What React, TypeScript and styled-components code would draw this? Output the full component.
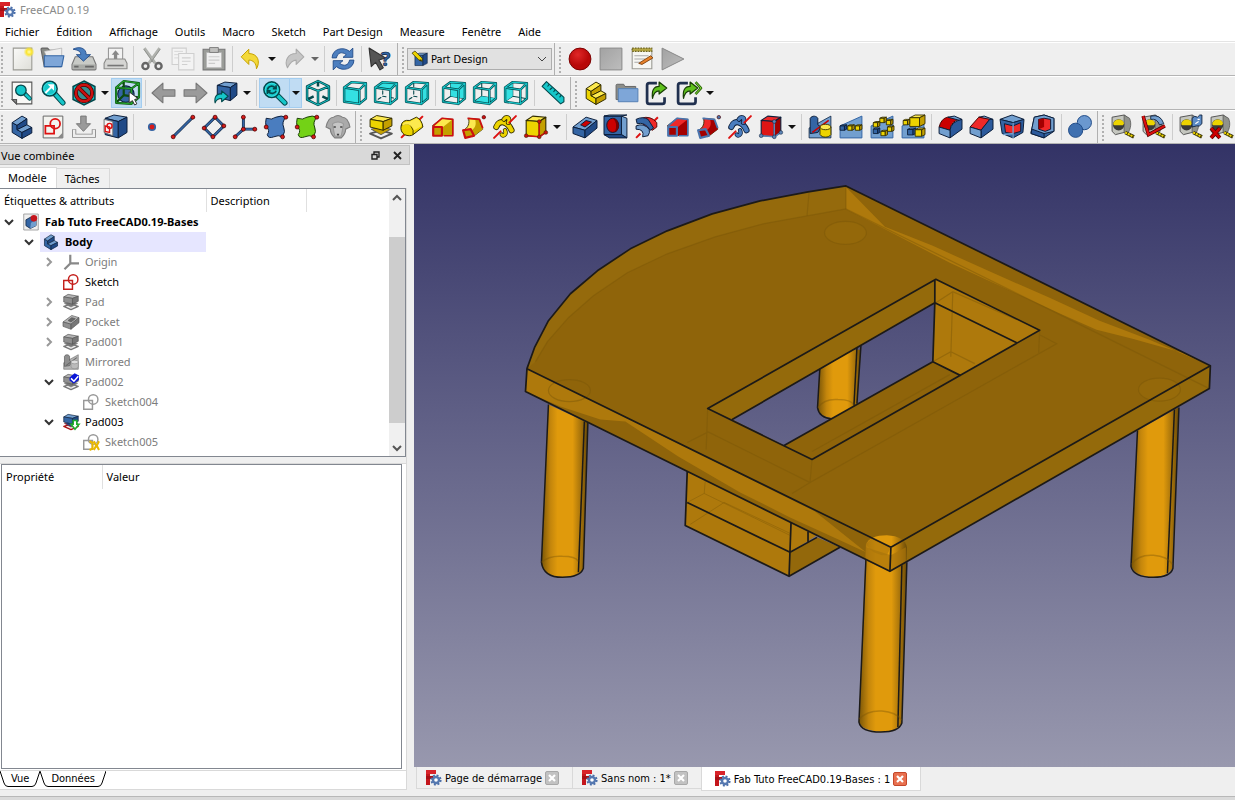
import React from "react";
import styled, { createGlobalStyle } from "styled-components";

const uiFont = '"Noto Sans", "Open Sans", "Liberation Sans", sans-serif';
const tabFont = '"DejaVu Sans Condensed", "DejaVu Sans", "Liberation Sans", sans-serif';

const GlobalStyle = createGlobalStyle`
  * { box-sizing: border-box; }
  body { margin: 0; background: #efefef; color: #000; font: 11px/16px ${uiFont}; }
  button, select { font: inherit; color: inherit; }
  h1, h2 { margin: 0; font: inherit; }
  svg { display: block; }
`;

/* ---------- palette of the icon theme ---------- */
const B = "#3465a4", BL = "#729fcf", BD = "#0b1e3a";
const T = "#16c6c9", TL = "#34e0e2", TD = "#04484c";
const Y = "#edd400", YL = "#fce94f", YM = "#c4a000", YD = "#302b00";
const R = "#cc0000", RL = "#ef2929", RD = "#4a0000";
const G = "#9a9a9a", GD = "#666";

type Tone = [string, string, string, string];
const blue: Tone = [BL, B, "#204a87", BD];
const yellow: Tone = [YL, Y, YM, YD];
const red: Tone = [RL, "#dd1515", "#a40000", BD];
const gray: Tone = ["#b4b4b4", "#8f8f8f", "#777", "#555"];

const Box = ({ x, y, w, h, d = w / 2, tone }: { x: number; y: number; w: number; h: number; d?: number; tone: Tone }) => (
  <g stroke={tone[3]} strokeWidth="0.8" strokeLinejoin="round">
    <path fill={tone[0]} d={`M${x} ${y + d / 2}L${x + d} ${y}H${x + w + d}L${x + w} ${y + d / 2}z`} />
    <path fill={tone[1]} d={`M${x} ${y + d / 2}h${w}v${h}h${-w}z`} />
    <path fill={tone[2]} d={`M${x + w} ${y + d / 2}l${d} ${-d / 2}v${h}l${-d} ${d / 2}z`} />
  </g>
);

const cubeFaces: Record<string, string> = {
  front: "M2 7L16 9V22L2 20z",
  top: "M2 7L9 2L22 3L16 9z",
  right: "M16 9L22 3V17L16 22z",
  rear: "M9 2L22 3V17L9 15z",
  bottom: "M2 20L9 15L22 17L16 22z",
  left: "M2 7L9 2V15L2 20z",
};
const WireCube = ({ face }: { face: string }) => (
  <g strokeLinejoin="round" strokeLinecap="round" fill="none">
    {face !== "front" && <path d="M9 3V15L3 19M9 15L21 17" stroke={TD} strokeWidth="1" strokeDasharray={face === "top" || face === "right" ? "3 4" : undefined} />}
    <path d={cubeFaces[face]} fill={TL} />
    <path d="M2 7L16 9V22L2 20zM2 7L9 2L22 3L16 9M22 3V17L16 22" stroke={TD} strokeWidth="2.2" />
    <path d="M2 7L16 9V22L2 20zM2 7L9 2L22 3L16 9M22 3V17L16 22" stroke={T} strokeWidth="1" />
  </g>
);

const Lens = ({ cx, cy, r }: { cx: number; cy: number; r: number }) => (
  <g>
    <path d={`M${cx + r * 0.7} ${cy + r * 0.7}L21 21`} stroke={TD} strokeWidth="5" strokeLinecap="round" />
    <path d={`M${cx + r * 0.8} ${cy + r * 0.8}L21 21`} stroke={T} strokeWidth="3.2" strokeLinecap="round" />
    <circle cx={cx} cy={cy} r={r} fill={T} stroke={TD} strokeWidth="1.4" />
    <circle cx={cx} cy={cy} r={r - 1.3} fill="none" stroke={TL} strokeWidth="0.9" />
  </g>
);

const Dots = ({ pts }: { pts: [number, number][] }) => (
  <>{pts.map(([x, y]) => <circle key={`${x}-${y}`} cx={x} cy={y} r="1.8" fill="#d61a1a" stroke={RD} strokeWidth="0.7" />)}</>
);

const Loft = ({ a, b, c }: { a: string; b: string; c: string }) => (
  <g strokeLinejoin="round">
    <path d="M2 11L11 4L21 5V19L12 20z" fill={a} stroke={YD} strokeWidth="0.6" />
    <path d="M12 12L21 5V19L12 20z" fill={b} />
    <path d="M3 11L11 4L21 5V20H13" fill="none" stroke={c} strokeWidth="1.5" />
    <path d="M3 12H11V20H3z" fill={b} stroke={c} strokeWidth="2" />
  </g>
);
const Pipe = ({ a, b, c }: { a: string; b: string; c: string }) => (
  <g strokeLinejoin="round">
    <path d="M2 15C7 13 8 8 7 4L17 5C17 10 20 12 20 14L11 21z" fill={a} stroke={YD} strokeWidth="0.8" />
    <path d="M13 5L17 5.5C17 10 20 12 20 14L12 20L10 15C14 12 14 9 13 5z" fill={b} />
    <path d="M6 4L17 5L20 13" fill="none" stroke={c} strokeWidth="1.6" />
    <path d="M2 15L9 14L12 20L4 22z" fill={b} stroke={c} strokeWidth="2" />
    <circle cx="21" cy="3" r="1.6" fill={c} stroke={RD} strokeWidth="0.6" />
  </g>
);
const Helix = ({ a, b, c }: { a: string; b: string; c: string }) => (
  <g fill="none" strokeLinecap="round">
    <path d="M4 12C7 4 15 8 18 15" stroke={b} strokeWidth="5.6" />
    <path d="M4 12C7 4 15 8 18 15" stroke={a} strokeWidth="4" />
    <path d="M11 5C13 2 17 3 15 8" stroke={b} strokeWidth="4.4" />
    <path d="M11 5C13 2 17 3 15 8" stroke={a} strokeWidth="3" />
    <path d="M9 19C10 21 14 19 12 15" stroke={b} strokeWidth="4" />
    <path d="M9 19C10 21 14 19 12 15" stroke={a} strokeWidth="2.6" />
    <path d="M2 22L8 16M16 8L22 2" stroke={c} strokeWidth="1.8" />
  </g>
);
const PrimCube = ({ t, dot }: { t: Tone; dot: string }) => (
  <g strokeLinejoin="round">
    <path d="M3 6L9 2L21 3L15 7z" fill={t[0]} stroke={t[3]} />
    <path d="M3 6L15 7V21L3 20z" fill={t[1]} stroke={t[3]} />
    <path d="M15 7L21 3V17L15 21z" fill={t[2]} stroke={t[3]} />
    <path d="M3 20L15 21V7M15 21L21 17" fill="none" stroke={dot} strokeWidth="1.4" />
    {[[3, 20], [15, 21], [21, 17], [15, 7]].map(([x, y]) => <circle key={x + y} cx={x} cy={y} r="1.7" fill={dot} stroke={t[3]} strokeWidth="0.5" />)}
  </g>
);

const Tape = () => (
  <g strokeLinejoin="round">
    <path d="M2 3L13 1L17 4V16L5 19L2 16z" fill="#c4c6bf" stroke="#555" strokeWidth="0.9" />
    <path d="M13 1L18 4C20 9 19 13 17 17L13 17z" fill="#90928c" stroke="#555" strokeWidth="0.7" />
    <circle cx="8" cy="10" r="5.2" fill="#3a3a38" />
    <path d="M3 9.500A5.200 5.200 0 0 1 13 8.500L12 10.500H4z" fill={Y} />
    <path d="M14 17L22 21" stroke={YD} strokeWidth="3.2" />
    <path d="M14 17L21.500 20.800" stroke={Y} strokeWidth="1.9" strokeDasharray="2 0.7" />
  </g>
);

const Slope = () => <path d="M2 11L22 2V22H2z" fill={BL} stroke={B} strokeWidth="0.9" />;
const PadShape = ({ t, base }: { t: Tone; base: string }) => (
  <g strokeLinejoin="round">
    <path d="M2 18L12 15L22 18L12 22.500z" fill="#eee" stroke={base} strokeWidth="1.7" />
    <path d="M3 14L12 12L21 14L12 19z" fill={t[2]} stroke={base} strokeWidth="0.8" />
    <path d="M2 5L8 1.500L22 4L14 7z" fill={t[0]} stroke={t[3]} strokeWidth="0.9" />
    <path d="M2 5L14 7V15L2 12z" fill={t[1]} stroke={t[3]} strokeWidth="0.9" />
    <path d="M14 7L22 4V11L14 15z" fill={t[2]} stroke={t[3]} strokeWidth="0.9" />
  </g>
);
const PocketShape = ({ t, hole }: { t: Tone; hole: string }) => (
  <g strokeLinejoin="round" strokeWidth="0.9">
    <path d="M1 12L13 3L23 6L12 15z" fill={t[0]} stroke={t[3]} />
    <path d="M1 12L12 15V22L1 18z" fill={t[1]} stroke={t[3]} />
    <path d="M12 15L23 6V13L12 22z" fill={t[2]} stroke={t[3]} />
    <path d="M8 10L13 6L18 7.500L12 12z" fill={hole} stroke={t[3]} />
  </g>
);
const BodyShape = ({ t }: { t: Tone }) => (
  <g strokeLinejoin="round" stroke={t[3]} strokeWidth="0.9">
    <path d="M3 8L7.500 10.500V14.500L12 17V22.500L3 17z" fill={t[1]} />
    <path d="M3 8L12 2L16.500 4.500L7.500 10.500z" fill={t[0]} />
    <path d="M7.500 10.500L16.500 4.500V10L7.500 14.500z" fill={t[2]} />
    <path d="M7.500 14.500L16.500 10L21 12.500L12 17z" fill={t[0]} />
    <path d="M12 17L21 12.500V17.500L12 22.500z" fill={t[2]} />
  </g>
);
const SketchShape = ({ c }: { c: string }) => (
  <g fill="none" stroke={c} strokeWidth="2">
    <path d="M2 10H14V22H2z" /><circle cx="15" cy="8.500" r="6.500" />
  </g>
);
const Mirror = ({ t, alt }: { t: Tone; alt: Tone }) => (
  <g strokeLinejoin="round">
    <path d="M2 13L22 2V22H2z" fill={t[0]} stroke={t[3]} strokeWidth="0.7" />
    <path d="M3 4C5 1 9 2 10 4V10L13 12L10 17L3 18z" fill={t[1]} stroke={t[3]} strokeWidth="0.9" />
    <path d="M5 17L20 6" stroke={alt === yellow ? R : GD} strokeWidth="1.4" />
    <path d="M12 12V19C14 22 20 22 22 19V12z" fill={alt[1]} stroke={alt[3]} strokeWidth="0.8" />
    <ellipse cx="17" cy="12" rx="5" ry="2.500" fill={alt[0]} stroke={alt[3]} strokeWidth="0.8" />
  </g>
);
const GreenShare = ({ twice }: { twice?: boolean }) => (
  <g strokeLinejoin="round">
    <path d="M11 3H4Q2 3 2 5V20Q2 22 4 22H16Q18 22 18 20V16" fill="none" stroke="#20304f" strokeWidth="2.5" />
    {twice && <path d="M18 2L23 7.500L18 13" fill="none" stroke="#2f6b0a" strokeWidth="2.4" />}
    {twice && <path d="M18 2L23 7.500L18 13" fill="none" stroke="#7fd63a" strokeWidth="0.9" />}
    <path d="M7 17C6 10 8 6 13 6V2L20 7.500L13 13V10C10 10 8 12 7 17z" fill="#5fc11c" stroke="#173d04" strokeWidth="1.1" />
  </g>
);

const icons: Record<string, React.ReactNode> = {
  new: <g><path d="M4 2H21V22H4z" fill="url(#paper)" stroke="#9a9a94" /><circle cx="18.500" cy="5.500" r="5" fill="url(#sun)" /></g>,
  open: <g strokeLinejoin="round"><path d="M1 3Q1 2 2 2H7L9 4H19V19H4z" fill="#888a85" stroke="#666" /><path d="M4 5L20 2V10H6z" fill="#eee" stroke="#aaa" strokeWidth="0.6" /><path d="M4 9H22L20 19H4z" fill="#7ea6d8" stroke={B} /></g>,
  save: <g strokeLinejoin="round"><path d="M4 10H20L23 17V21Q23 22 22 22H2Q1 22 1 21V17z" fill="#c8cac6" stroke="#777" /><path d="M2 17H22V21H2z" fill="#a9aba7" /><path d="M13 19H21M3 19H7" stroke="#666" strokeWidth="1.5" /><path d="M2 3C8 0 14 2 14 8H18L11.500 14L5 8H9C9 5 7 4 2 3z" fill="#4b80c0" stroke="#204a87" strokeWidth="0.8" /></g>,
  print: <g strokeLinejoin="round"><path d="M6 2H19V13H6z" fill="#f2f2f2" stroke="#999" /><path d="M12.500 4L16 8H14V12H11V8H9z" fill="#888" /><path d="M4 12H21L23 16V21H2V16z" fill="#d5d5d3" stroke="#8a8a88" /><path d="M5 18H20" stroke="#777" strokeWidth="1.5" /></g>,
  cut: <g fill="none" stroke="#8b8d8a"><path d="M5 2L15 16M19 2L9 16" strokeWidth="2.6" stroke="#b0b2ae" /><path d="M4.500 3L13 15M19.500 3L11 15" strokeWidth="0.8" /><circle cx="6" cy="18.500" r="2.800" strokeWidth="2.2" stroke="#666" /><circle cx="18" cy="18.500" r="2.800" strokeWidth="2.2" stroke="#666" /></g>,
  copy: <g fill="#f3f3f3" stroke="#cfcfcf"><path d="M2 2H15V17H2z" /><path d="M4 5H12M4 8H12M4 11H8" strokeWidth="0.7" /><path d="M8 7H22V22H8z" /><path d="M11 11H19M11 14H19M11 17H16" /></g>,
  paste: <g><path d="M2 3H22V22H2z" fill="#9a9c98" stroke="#777" /><path d="M5 6H19V20H5z" fill="#f0f0f0" stroke="#aaa" strokeWidth="0.6" /><path d="M8 1.500H16V6H8z" fill="#c0c0be" stroke="#777" strokeWidth="0.8" /><path d="M7 10H17M7 13H17M7 16H13" stroke="#ccc" /></g>,
  undo: <path d="M10 3V7C18 7 21 14 17 21C17 16 14 13 10 13V17L3 10z" fill="#f3d93a" stroke={YM} strokeWidth="0.9" strokeLinejoin="round" />,
  redo: <path d="M14 3V7C6 7 3 14 6 20C8 16 10 13 14 13V17L21 10z" fill="#c6c6c6" stroke="#aaa" strokeLinejoin="round" />,
  refresh: <g fill="#4d7fbf" stroke="#204a87" strokeWidth="0.8" strokeLinejoin="round"><path d="M2 11C2 3 12 0 18 5L21 2V10.500H12L15 8C11 5 7 6 6 11z" /><path d="M22 13C22 21 12 24 6 19L3 22V13.500H12L9 16C13 19 17 18 18 13z" /></g>,
  whats: <g><path d="M2 2L4 19L8 15L12 22L15 20L11 13L17 11z" fill="#555" stroke="#333" strokeLinejoin="round" /><text x="13" y="18" fontFamily={uiFont} fontSize="18" fontWeight="700" fill={B} stroke={BD} strokeWidth="0.6">?</text></g>,
  workbench: <g><Box x={5} y={4} w={11} h={14} d={6} tone={blue} /><path d="M1 4L5 1L15 11V15L11 14z" fill={Y} stroke={YD} /><path d="M12 12L15 15L11 14z" fill={YD} /></g>,
  record: <circle cx="12" cy="12" r="10" fill="url(#rec)" stroke="#7a0000" strokeWidth="0.9" />,
  stop: <path d="M2 2H22V22H2z" fill="url(#metal)" stroke="#888" strokeWidth="0.9" />,
  macro: <g><path d="M3 3H21V21H3z" fill="#f6f6f2" stroke="#9a9a94" /><path d="M3 2H21V5H3z" fill="#b5a642" stroke="#6c6320" strokeDasharray="1.5 1" /><path d="M5 9H18M5 12H15M5 15H11" stroke="#aaa" /><path d="M9 16L20 9L22 11L12 17z" fill="#e9822a" stroke="#7a3d08" strokeWidth="0.8" /></g>,
  play: <path d="M2 2L22 12L2 22z" fill="url(#metal)" stroke="#888" strokeWidth="0.9" strokeLinejoin="round" />,

  fitAll: <g><path d="M3 2H21V22H7L3 18z" fill="#f8f8f6" stroke="#555" /><path d="M3 18H7V22z" fill="#888" stroke="#555" /><path d="M15 13L19 17" stroke={TD} strokeWidth="4" strokeLinecap="round" /><path d="M15 13L19 17" stroke={T} strokeWidth="2.4" strokeLinecap="round" /><circle cx="11" cy="9.500" r="4.800" fill={T} stroke={TD} strokeWidth="1.2" /></g>,
  fitSel: <g><Lens cx={9} cy={8} r={6.8} /><path d="M5 12L11 6" stroke="#fff" strokeWidth="1.8" /><path d="M7 4H13V10z" fill="#fff" /></g>,
  style: <g><path d="M12 1L22 6V18L12 23L2 18V6z" fill={T} stroke={TD} strokeWidth="1.4" /><circle cx="12" cy="12" r="7.500" fill="#555" fillOpacity="0.500" stroke={RD} strokeWidth="3.6" /><path d="M7 7L17 17" stroke={RD} strokeWidth="3.6" /><circle cx="12" cy="12" r="7.500" fill="none" stroke="#c11" strokeWidth="2.2" /><path d="M7 7L17 17" stroke="#c11" strokeWidth="2.2" /></g>,
  bbox: <g fill="none" strokeLinejoin="round"><circle cx="11" cy="13" r="7.500" fill={B} stroke={BD} /><path d="M2 7L16 8V22L2 21zM2 7L9 1L23 3L16 8M23 3V16L16 22M9 1V14L2 21M9 14L22 16" stroke="#0c4a10" strokeWidth="2" /><path d="M2 7L16 8V22L2 21zM2 7L9 1L23 3L16 8M23 3V16L16 22" stroke="#25a52c" strokeWidth="1" /><path d="M14 11V21L17 19L19 23L21 22L19 18L22 17z" fill="#fff" stroke="#333" strokeWidth="0.9" /></g>,
  back: <path d="M1 12L11 3V9H22V15H11V21z" fill={G} stroke="#777" strokeLinejoin="round" />,
  fwd: <path d="M23 12L13 3V9H2V15H13V21z" fill={G} stroke="#777" strokeLinejoin="round" />,
  linkSel: <g><g stroke={BD} strokeWidth="0.9" strokeLinejoin="round"><path d="M4 5L11 2L22 3L16 7z" fill={BL} /><path d="M4 5L16 7V19L4 16z" fill={B} /><path d="M16 7L22 3V14L16 19z" fill="#204a87" /></g><path d="M2 21C1 15 4 12 8 13V10L14 15L8 20V17C5 17 3 18 2 21z" fill={T} stroke={TD} strokeLinejoin="round" /></g>,
  sync: <g><Lens cx={9} cy={9} r={7.2} /><path d="M5 9C6 5 10 5 12 7M13 5V8H10M13 10C12 13 8 13 6 11M5 13V10H8" fill="none" stroke={TD} strokeWidth="1.5" /></g>,
  iso: <g fill="none" strokeLinejoin="round"><path d="M12 1L22 6V18L12 23L2 18V6zM2 6L12 10L22 6M12 10V23M12 1V6M2 18L8 15M22 18L16 15" stroke={TD} strokeWidth="2.3" /><path d="M12 1L22 6V18L12 23L2 18V6zM2 6L12 10L22 6M12 10V23" stroke={T} strokeWidth="0.9" /></g>,
  front: <WireCube face="front" />, top: <WireCube face="top" />, right: <WireCube face="right" />,
  rear: <WireCube face="rear" />, bottom: <WireCube face="bottom" />, left: <WireCube face="left" />,
  ruler: <g strokeLinejoin="round"><path d="M2 6L6 1.500L22 16V20L19 22z" fill={T} stroke={TD} /><path d="M8.500 4L7 6M11.500 7L9 9M14 9L12.500 11M17 12L14.500 14M19.500 14L18 16" stroke={TD} /></g>,
  part: <BodyShape t={yellow} />,
  group: <g strokeLinejoin="round"><path d="M2 5Q2 4 3 4H9L10 6H20V18H2z" fill="#8b8d89" stroke="#666" strokeWidth="0.9" /><path d="M4 8H22V20H4z" fill="#7ea6d8" stroke="#5580b5" strokeWidth="0.9" /></g>,
  link: <GreenShare />, linkGroup: <GreenShare twice />,

  body: <BodyShape t={blue} />,
  sketchPage: <g><path d="M3 2H21V22H3z" fill="#f3f3ef" stroke="#666" strokeWidth="0.9" /><g fill="none" stroke="#d11" strokeWidth="1.6"><path d="M5 11H13V18H5z" /><circle cx="14" cy="9" r="4.500" /></g><path d="M16 22L21 17V22z" fill="#888" /></g>,
  import: <g><path d="M3 14V20H21V14" fill="none" stroke="#888" strokeWidth="3.800" /><path d="M3 14.500V20H21V14.500" fill="none" stroke="#eee" strokeWidth="2.200" /><path d="M9 2H14V9H18L11.500 16L5 9H9z" fill={G} stroke="#777" strokeWidth="0.9" /></g>,
  validate: <g><g stroke={BD} strokeWidth="0.9" strokeLinejoin="round"><path d="M3 4L11 1L23 3L15 7z" fill={BL} /><path d="M3 4L15 7V22L3 19z" fill={B} /><path d="M15 7L23 3V17L15 22z" fill="#204a87" /></g><path d="M2 5L10 7V20L2 17z" fill="#f4f4f4" stroke="#666" strokeWidth="0.8" /><g fill="none" stroke="#d11" strokeWidth="1.3"><path d="M3 11L7 12V17L3 16z" /><circle cx="7" cy="11" r="2.300" /></g></g>,
  point: <circle cx="12" cy="12" r="3" fill="#d61a1a" stroke={B} strokeWidth="1.5" />,
  line: <g><path d="M3 21L21 3" stroke={BD} strokeWidth="2.6" /><path d="M3 21L21 3" stroke={B} strokeWidth="1.7" /><Dots pts={[[3, 21], [21, 3]]} /></g>,
  plane: <g><path d="M13 3L21 11L11 21L3 13z" fill="none" stroke={BD} strokeWidth="2.6" strokeLinejoin="round" /><path d="M13 3L21 11L11 21L3 13z" fill="none" stroke={B} strokeWidth="1.6" /><Dots pts={[[13, 3], [21, 11], [11, 21], [3, 13]]} /></g>,
  cs: <g><path d="M10.500 14V3M10.500 14L3 21M10.500 14H21" stroke={BD} strokeWidth="2.6" /><path d="M10.500 14V3M10.500 14L3 21M10.500 14H21" stroke={B} strokeWidth="1.6" /><Dots pts={[[10.500, 3], [3, 21], [10.500, 14], [21, 14]]} /></g>,
  binder: <g><path d="M3 4Q8 6 12 3Q17 1 21 3Q17 8 19 12Q21 16 18 21Q14 19 10 21Q5 23 4 19Q7 15 3 12Q2 8 3 4z" fill="#4a7dbf" stroke={BD} strokeWidth="0.9" /><Dots pts={[[21, 3], [3, 12], [18, 21]]} /></g>,
  clone: <g><path d="M3 4Q8 6 12 3Q17 1 21 3Q17 8 19 12Q21 16 18 21Q14 19 10 21Q5 23 4 19Q7 15 3 12Q2 8 3 4z" fill="#73d216" stroke="#173d04" strokeWidth="0.9" /><Dots pts={[[21, 3], [3, 12], [18, 21]]} /></g>,
  sheep: <g fill="#aaa" stroke="#7d7d7d"><path d="M1 12Q3 3 8 3Q12 0 16 3Q21 3 23 12L19 14Q19 18 15 22H9Q5 18 5 14z" /><path d="M7 9Q12 6 17 9L15 20Q12 22 9 20z" fill="#c6c6c6" strokeWidth="0.5" /><path d="M8 12H10M14 12H16M11 19H13" stroke="#444" strokeWidth="1.5" /></g>,

  pad: <PadShape t={yellow} base="#555" />,
  revolve: <g><path d="M2 22L6 18M17 7L22 2" stroke="#d11" strokeWidth="1.8" /><path d="M2 11Q3 5 10 6L16 3Q21 5 22 12L13 19Q10 21 5 19Q1 16 2 11z" fill={Y} stroke={YD} strokeWidth="0.9" /><path d="M2 11Q8 7 11 11Q14 15 13 19" fill="none" stroke={YD} strokeWidth="0.8" /><path d="M3 11Q3 7 10 7L16 4Q20 6 21 11L14 15Q10 7 3 11z" fill={YL} /></g>,
  loft: <Loft a={YL} b={YM} c="#cc1010" />,
  pipe: <Pipe a={YL} b={YM} c="#cc1010" />,
  helix: <Helix a={Y} b={YD} c="#d11" />,
  prim: <PrimCube t={yellow} dot="#cc1010" />,
  pocket: <PocketShape t={blue} hole={R} />,
  hole: <g strokeLinejoin="round" strokeWidth="0.9"><path d="M1 2H17V19H1z" fill={B} stroke={BD} /><path d="M1 2L6 1H22L17 2z" fill={BL} stroke={BD} /><path d="M17 2L22 4V22L17 19z" fill={BL} stroke={BD} /><path d="M1 19L6 22H22L17 19z" fill="#204a87" stroke={BD} /><ellipse cx="9" cy="10.500" rx="5.500" ry="6.500" fill={R} stroke={BD} /><path d="M9 4Q14 8 11 17Q16 14 14 8Q12 4 9 4" fill="#7a0000" /></g>,
  groove: <g><path d="M2 22L6 18M18 7L22 3" stroke="#d11" strokeWidth="1.8" /><path d="M7 4Q15 1 21 8V12L17 15L9 11z" fill={RL} stroke={RD} strokeWidth="0.8" /><path d="M2 5Q8 2 13 5L18 13L15 15Q10 7 3 9z" fill={B} stroke={BD} strokeWidth="0.9" /><path d="M2 11Q9 8 14 14Q15 17 13 20L8 21Q10 14 2 14z" fill={BL} stroke={BD} strokeWidth="0.9" /></g>,
  subLoft: <Loft a={RL} b="#a40000" c="#4a74ad" />,
  subPipe: <Pipe a={RL} b="#a40000" c="#4a74ad" />,
  subHelix: <Helix a="#4a7dbf" b={BD} c="#d11" />,
  subPrim: <PrimCube t={red} dot="#5d86b8" />,
  mirror: <Mirror t={blue} alt={yellow} />,
  linear: <g><Slope /><Box x={2} y={10} w={4} h={4} tone={blue} /><Box x={9} y={10} w={4} h={4} tone={yellow} /><Box x={16} y={10} w={4} h={4} tone={yellow} /></g>,
  polar: <g><Slope />{[[10, 3], [16, 5], [17, 11], [11, 15], [4, 7]].map(([x, y]) => <Box key={x * 30 + y} x={x} y={y} w={4} h={4} tone={yellow} />)}<Box x={4} y={13} w={4} h={4} tone={blue} /></g>,
  multi: <g><Slope /><Box x={9} y={1} w={9} h={8} d={5} tone={yellow} /><Box x={3} y={5} w={4} h={4} tone={yellow} /><Box x={7} y={13} w={5} h={5} tone={blue} /><Box x={14} y={13} w={6} h={6} tone={yellow} /></g>,
  fillet: <g strokeLinejoin="round" stroke={BD} strokeWidth="0.9"><path d="M2 12Q4 4 10 3L21 5Q13 6 12 15z" fill={R} stroke={RD} /><path d="M10 3L16 2L23 5L21 6z" fill={BL} /><path d="M12 15Q13 7 23 5V14L12 22z" fill="#2c5a9c" /><path d="M2 12L12 15V22L2 18z" fill={BL} /></g>,
  chamfer: <g strokeLinejoin="round" stroke={BD} strokeWidth="0.9"><path d="M10 3L15 2L23 5L20 6z" fill={BL} /><path d="M2 12L10 3L20 5L12 15z" fill={RL} stroke={RD} /><path d="M12 15L20 5H23V14L12 22z" fill="#2c5a9c" /><path d="M2 12L12 15V22L2 18z" fill={BL} /></g>,
  draft: <g strokeLinejoin="round" stroke={BD} strokeWidth="0.9"><path d="M1 5L12 1L23 5L13 8z" fill={BL} /><path d="M1 5L13 8V22L3 18z" fill={B} /><path d="M23 5L13 8V22L22 17z" fill="#2c5a9c" /><path d="M5 9L13 11L20 8V16L13 18L6 17z" fill={RL} /><path d="M13 8V22M13 18L4 19" stroke={BL} strokeWidth="1.3" /></g>,
  thick: <g strokeLinejoin="round" stroke={BD} strokeWidth="0.9"><path d="M4 3L13 1L22 4V16L13 22L1 18z" fill={B} /><path d="M4 3L13 1L22 4V16L13 18L1 17z" fill={BL} /><path d="M8 5L13 4L19 5V14L14 16L8 14z" fill={RL} /><path d="M8 5L13 4V12L8 14z" fill="#a40000" stroke="none" /><path d="M1 18L2 14L13 18V22z" fill="#2c5a9c" /></g>,
  bool: <g stroke="#204a87" strokeWidth="0.9"><circle cx="16" cy="8" r="6.500" fill="#6b98cf" /><circle cx="8" cy="15" r="6.500" fill="#3f70b0" /></g>,

  measure: <Tape />,
  angle: <g><Tape /><path d="M9 2Q18 0 21 9L17 10Q15 4 9 5z" fill={BL} stroke={BD} strokeWidth="0.8" /><path d="M2 2L7 19L22 11" fill="none" stroke={RD} strokeWidth="3.2" /><path d="M2 2L7 19L22 11" fill="none" stroke="#d11" strokeWidth="2" /></g>,
  toggle: <g><Tape /><path d="M13 4Q15 1 18 3L20 1H22V9Q20 12 17 11L13 12z" fill="#5d8cc6" stroke={BD} strokeWidth="0.8" /><path d="M18 5H20M16 9L19 7" stroke="#fff" /></g>,
  clear: <g><Tape /><path d="M2 13L10 22M10 13L2 22" stroke={RD} strokeWidth="3.6" /><path d="M2 13L10 22M10 13L2 22" stroke={R} strokeWidth="2.4" /></g>,

  doc: <g><path d="M2 1H22V23H2z" fill="#efefef" stroke="#888" /><path d="M5 9L12 5L19 9V17L11 21L5 17z" fill={B} stroke={BD} /><path d="M12 13L19 9V17L11 21z" fill={BL} /><circle cx="16" cy="7" r="4.500" fill="#c4151c" /></g>,
  origin: <g stroke="#888" strokeWidth="3" fill="none"><path d="M11 2V14L3 22M11 14H23" /></g>,
  sketchRed: <SketchShape c="#c4201c" />,
  sketchGray: <SketchShape c="#999" />,
  padGray: <PadShape t={gray} base="#777" />,
  pocketGray: <PocketShape t={gray} hole="#666" />,
  mirrorGray: <Mirror t={gray} alt={["#ddd", "#bbb", "#999", "#888"]} />,
  padCheck: <g><PadShape t={gray} base="#777" /><path d="M10 6L13 3L17 0L23 3V9L16 14L10 10z" fill="#0a16d8" /><path d="M12 7L16 11L22 4" stroke="#fff" strokeWidth="2" fill="none" /></g>,
  padTip: <g><PadShape t={blue} base="#a11" /><path d="M15 10H20V15H23L17.500 22L12 15H15z" fill="#fff" stroke="#1fae2b" strokeWidth="2.2" /></g>,
  sketchLock: <g><SketchShape c="#999" /><path d="M10 11L14 13V21L10 23M16 11L19 17L16 23M23 11L20 17L23 23" fill="none" stroke="#e9b800" strokeWidth="2.8" /></g>,
};

const Svg = styled.svg<{ $s: number }>`
  flex: none;
  width: ${(p) => p.$s}px;
  height: ${(p) => p.$s}px;
  overflow: visible;
`;
const Icon = ({ name, size = 24 }: { name: string; size?: number }) => (
  <Svg $s={size} viewBox="1 1 22 22" fill="none" aria-hidden="true">{icons[name]}</Svg>
);

const Logo = () => (
  <Svg $s={16} viewBox="0 0 16 16" aria-hidden="true">
    <rect x="0" y="0" width="4" height="15" fill="#c4161c" />
    <rect x="0" y="0" width="10" height="4" fill="#d8232a" />
    <rect x="0" y="6" width="7" height="3" fill="#a80f15" />
    <circle cx="10" cy="10" r="4.600" fill="none" stroke="#4a6ea9" strokeWidth="2" strokeDasharray="1.9 1.713" />
    <circle cx="10" cy="10" r="3" fill="#fff" stroke="#5578b0" strokeWidth="2.400" />
  </Svg>
);

/* ---------- window frame ---------- */
const Window = styled.div`
  display: flex;
  flex-direction: column;
  min-width: 800px;
  height: 100vh;
  min-height: 600px;
  overflow: hidden;
`;
const TitleBar = styled.header`
  display: flex;
  align-items: center;
  gap: 4px;
  height: 20px;
  background: #fff;
  color: #8a8a8a;
`;
const MenuBar = styled.nav`
  display: flex;
  gap: 17px;
  align-items: center;
  height: 22px;
  padding: 2px 5px 0;
  background: #fff;
  border-bottom: 1px solid #e4e4e4;
`;
const MenuItem = styled.button`
  border: 0;
  padding: 0;
  background: none;
`;
const ToolRow = styled.div`
  display: flex;
  height: 34px;
  overflow: hidden;
  border-top: 1px solid #fff;
  border-bottom: 1px solid #b4b4b4;
  background: #efefef;
`;
const ToolBar = styled.div<{ $open?: boolean }>`
  display: flex;
  flex: none;
  align-items: center;
  padding-right: 2px;
  border-right: ${(p) => (p.$open ? "0" : "1px solid #b0b0b0")};
`;
const Grip = styled.span<{ $first?: boolean }>`
  align-self: stretch;
  width: ${(p) => (p.$first ? 6 : 9)}px;
  margin: 4px 0 2px;
  background: linear-gradient(#b0b0b0 2px, transparent 2px) ${(p) => (p.$first ? 1 : 4)}px 0 / 2px 4px repeat-y;
`;
const Tool = styled.button<{ $on?: boolean }>`
  display: grid;
  place-items: center;
  width: 31px;
  height: 30px;
  padding: 0;
  border: 1px solid ${(p) => (p.$on ? "#a3cdf0" : "transparent")};
  background: ${(p) => (p.$on ? "#c0dcf3" : "none")};
`;
const Drop = styled.button<{ $on?: boolean }>`
  display: grid;
  place-items: center;
  width: 12px;
  height: 30px;
  padding: 0;
  border: 1px solid ${(p) => (p.$on ? "#a3cdf0" : "transparent")};
  border-left: 0;
  background: ${(p) => (p.$on ? "#c0dcf3" : "none")};
`;
const Sep = styled.span`
  width: 1px;
  height: 26px;
  margin: 0 2px 0 3px;
  background: #cdcdcd;
`;
const Combo = styled.label`
  display: grid;
  grid-template-columns: 16px 1fr 10px;
  align-items: center;
  gap: 3px;
  width: 145px;
  height: 22px;
  padding: 0 4px;
  border: 1px solid #adadad;
  background: #e1e1e1;
`;
const ComboSelect = styled.select`
  appearance: none;
  border: 0;
  padding: 2px 0 0;
  background: none;
  font: 11px/16px ${tabFont};
`;

const Arrow = ({ dim }: { dim?: boolean }) => (
  <svg width="8" height="5" viewBox="0 0 8 5" aria-hidden="true"><path d="M0 0H8L4 4z" fill={dim ? "#666" : "#111"} /></svg>
);
const Chevron = ({ dir, color = "#444", w = 2 }: { dir: "up" | "down" | "right"; color?: string; w?: number }) => (
  <svg width="10" height="10" viewBox="0 0 10 10" aria-hidden="true">
    <path d={dir === "down" ? "M1 3L5 7L9 3" : dir === "up" ? "M1 7L5 3L9 7" : "M3 1L7 5L3 9"} fill="none" stroke={color} strokeWidth={w} />
  </svg>
);

const tools = (list: string) =>
  list.split(" ").map((t, i) => {
    if (t === "|") return <Sep key={i} />;
    const on = t.endsWith("!");
    const n = on ? t.slice(0, -1) : t;
    if (n === "v" || n === "w") return <Drop key={i} $on={on} aria-label="Options"><Arrow dim={n === "w"} /></Drop>;
    return <Tool key={i} $on={on} aria-label={n}><Icon name={n} /></Tool>;
  });

/* ---------- dock ---------- */
const Main = styled.main`
  display: grid;
  grid-template-columns: 410px 1fr;
  gap: 4px;
  flex: 1;
  min-height: 0;
`;
const Dock = styled.aside`
  display: flex;
  flex-direction: column;
  min-height: 0;
  padding: 1px 0 6px;
`;
const DockTitle = styled.div`
  display: flex;
  align-items: center;
  gap: 13px;
  height: 20px;
  padding: 1px 7px 0 1px;
  border: 1px solid #c2c2c2;
  border-left: 0;
  background: #d9d9d9;
  h2 { flex: 1; }
`;
const DockButton = styled.button`
  display: block;
  padding: 0;
  border: 0;
  background: none;
`;
const Tabs = styled.div`
  display: flex;
  align-items: flex-end;
  height: 23px;
`;
const Tab = styled.button<{ $active?: boolean }>`
  height: ${(p) => (p.$active ? 21 : 20)}px;
  padding: 0 9px 0 8px;
  border: 1px solid #d9d9d9;
  border-width: 1px 1px 0 0;
  background: ${(p) => (p.$active ? "#fff" : "#f0f0f0")};
`;
const DockBody = styled.div`
  display: flex;
  flex-direction: column;
  flex: 1;
  min-height: 0;
  margin-right: 3px;
  border: 1px solid #d9d9d9;
  border-width: 0 1px 1px 0;
  background: #fff;
`;
const TreeFrame = styled.div`
  display: flex;
  flex: 0 0 269px;
  overflow: hidden;
  border: 1px solid #828790;
  border-left: 0;
`;
const TreeTable = styled.table`
  flex: 1;
  align-self: flex-start;
  width: 100%;
  border-collapse: collapse;
  table-layout: fixed;
  th { height: 23px; padding: 0 4px; text-align: left; font-weight: 400; border-right: 1px solid #e0e0e0; }
  th:last-child { border-right: 0; }
  td { height: 20px; padding: 0; }
`;
const Label = styled.div<{ $depth: number; $tone: "bold" | "body" | "dim" | "plain" }>`
  display: flex;
  align-items: center;
  height: 20px;
  padding-left: ${(p) => 4 + p.$depth * 20}px;
  white-space: nowrap;
  font-weight: ${(p) => (p.$tone === "bold" || p.$tone === "body" ? 700 : 400)};
  color: ${(p) => (p.$tone === "dim" ? "#7c7c7c" : "#000")};
`;
const Expander = styled.button`
  display: grid;
  place-items: center;
  width: 10px;
  height: 20px;
  margin-right: 6px;
  padding: 0;
  border: 0;
  background: none;
`;
const Caption = styled.span<{ $mark: boolean }>`
  display: flex;
  flex: 1;
  align-items: center;
  gap: 6px;
  height: 20px;
  padding-left: 3px;
  background: ${(p) => (p.$mark ? "#e6e6ff" : "none")};
`;
const ScrollBar = styled.div`
  display: flex;
  flex-direction: column;
  flex: none;
  width: 16px;
  background: #f0f0f0;
`;
const ScrollStep = styled.button`
  display: grid;
  place-items: center;
  height: 17px;
  padding: 0;
  border: 0;
  background: none;
`;
const ScrollThumb = styled.div`
  flex: 0 0 186px;
  margin: 31px 0 auto;
  background: #cdcdcd;
`;
const Splitter = styled.div`
  height: 7px;
  border-bottom: 1px solid #d9d9d9;
  background: #efefef;
`;
const PropFrame = styled.div`
  flex: 1;
  min-height: 0;
  margin: 0 4px 0 1px;
  border: 1px solid #828790;
`;
const PropTable = styled.table`
  width: 100%;
  border-collapse: collapse;
  table-layout: fixed;
  th { height: 24px; padding: 0 4px; text-align: left; font-weight: 400; }
  th:first-child { width: 100px; border-right: 1px solid #e0e0e0; }
`;
const BottomTabs = styled.div`
  display: flex;
  height: 19px;
  margin-top: 1px;
  border-top: 1px solid #d9d9d9;
`;
const BottomTab = styled.button`
  display: flex;
  padding: 0;
  border: 0;
  background: none;
  font: 11px/15px ${tabFont};
`;
const TabText = styled.span`
  height: 16px;
  padding: 0 3px;
  border-bottom: 1px solid #000;
`;
const Slant = ({ right }: { right?: boolean }) => (
  <svg width="8" height="16" viewBox="0 0 8 16" aria-hidden="true">
    <path d={right ? "M8 0L4 12Q3 15.500 0 15.500" : "M0 0L4 12Q5 15.500 8 15.500"} fill="none" stroke="#000" />
  </svg>
);

type Row = [number, string, string, "bold" | "body" | "dim" | "plain", "down" | "right" | ""];
const rows: Row[] = [
  [0, "doc", "Fab Tuto FreeCAD0.19-Bases", "bold", "down"],
  [1, "body", "Body", "body", "down"],
  [2, "origin", "Origin", "dim", "right"],
  [2, "sketchRed", "Sketch", "plain", ""],
  [2, "padGray", "Pad", "dim", "right"],
  [2, "pocketGray", "Pocket", "dim", "right"],
  [2, "padGray", "Pad001", "dim", "right"],
  [2, "mirrorGray", "Mirrored", "dim", ""],
  [2, "padCheck", "Pad002", "dim", "down"],
  [3, "sketchGray", "Sketch004", "dim", ""],
  [2, "padTip", "Pad003", "plain", "down"],
  [3, "sketchLock", "Sketch005", "dim", ""],
];

/* ---------- 3D view ---------- */
const ViewArea = styled.section`
  display: flex;
  flex-direction: column;
  min-width: 0;
  min-height: 0;
`;
const Scene = styled.svg`
  flex: 1;
  min-height: 0;
  width: 100%;
  background: linear-gradient(#333366, #9898ae);
`;
const DocTabs = styled.div`
  display: flex;
  align-items: flex-start;
  height: 29px;
  padding-left: 2px;
`;
const DocTab = styled.div<{ $active?: boolean }>`
  display: flex;
  align-items: center;
  gap: 3px;
  height: ${(p) => (p.$active ? 24 : 22)}px;
  padding: ${(p) => (p.$active ? "0 13px" : "0 13px 0 9px")};
  border: 1px solid #d9d9d9;
  border-width: 0 1px 1px;
  margin-right: -1px;
  background: ${(p) => (p.$active ? "#fff" : "#f0f0f0")};
  font: 11px/16px ${tabFont};
`;
const DocName = styled.button`
  padding: 2px 0 0;
  border: 0;
  background: none;
  white-space: nowrap;
`;
const CloseTab = styled.button<{ $active?: boolean }>`
  display: grid;
  place-items: center;
  width: 14px;
  height: 14px;
  padding: 0;
  border: 1px solid ${(p) => (p.$active ? "#c4472a" : "#a8a8a8")};
  border-radius: 2px;
  background: ${(p) => (p.$active ? "#e8704f" : "#c2c2c2")};
`;
const StatusBar = styled.footer`
  height: 4px;
  border-top: 1px solid #b8b8b8;
  background: #dadada;
`;

const Leg = ({ d, bottom, line, top }: { d: string; bottom: string; line: string; top?: string }) => (
  <g fill="none" stroke="#1c1a18" strokeWidth="1.500">
    <path d={d} fill="url(#leg)" stroke="none" />
    <path d={bottom} />
    <path d={line} />
    {top && <path d={top} stroke="#7a5608" strokeOpacity="0.400" />}
  </g>
);

const Model = () => (
  <Scene viewBox="414 144 821 624" preserveAspectRatio="xMidYMid meet" role="img" aria-label="Modèle 3D">
    <Leg d="M820 350H861L857 406Q850 419 837 419Q818 418 818 408z" bottom="M820 366L817.500 408Q819 418 832 419.500M861 346L857 404" line="M857 348L854 406" top="M818 408Q824 399 838 400Q852 400 854 406" />
    <path fillRule="evenodd" fill="#8f640a" d="M526.500 369L534 348L548 321L570 294L597 271L630 249L667 231L712 214L760 201L808 192L846 186L1211 366L1210 389L890 572L525 392z M732 420L935 303L933 362L784 446z" />
    <path fill="#956a0c" d="M526.500 369L534 348L548 321L570 294L597 271L630 249L667 231L712 214L760 201L808 192L846 186V209L807 216L763 224L715 237L667 254L627 273L593 296L568 318L547 342L535 362z" />
    <path fill="#ae790c" d="M846 187L885 227L933 246L993 273L1050 298L1100 321L1150 340L1211 366L1183 353L1133 339L1097 330L1063 315L950 263L846 209z" />
    <path fill="#946a0b" d="M707.500 409L936 279.500L935 303L732 420z M1211 366L1210 389L890 572L891 548z" />
    <path fill="#ae790c" d="M936 279.500L1040 330.500L961 376L933 362L935 303z" />
    <path fill="#ae790c" d="M526.500 369L815 512L866 553L840 541L790 518L740 493L678 457L625 422L600 420L560 407L525 392z" />
    <g fill="none" stroke="#7a5608" strokeOpacity="0.450" strokeWidth="1.200">
      <path d="M535 362L547 342L568 318L593 296L627 273L667 254L715 237L763 224L807 216L846 209L1210 389" />
      <path d="M846 186V209M809 193L807 216M707.500 409L706 450M687 443L708 432.500L810 483L1057 344L1040 335M812 460L810 483M792 494L810 483M1040 330L1039 353" />
      <path d="M953 292L951 357M936 303L953 292L1017 320M933 362L951 352L975 364M950 375L812 452" />
      <ellipse cx="845.500" cy="233" rx="21" ry="11.500" fill="#9a6d0b" fillOpacity="0.400" />
      <ellipse cx="569" cy="391" rx="21" ry="11" />
      <ellipse cx="1160" cy="390" rx="21" ry="11.500" fill="#9a6d0b" fillOpacity="0.400" />
    </g>
    <path fill="#ae790c" d="M687 472L791 523L817 536L790 553L789 577L685 526z" />
    <path fill="#93680b" d="M790 553L817 538L840 548L789 577z" />
    <path fill="none" stroke="#7a5608" strokeOpacity="0.400" d="M705 482L704 494L687 503M704 494L790 536M724 503L690 525M724 503L790 534" />
    <Leg d="M548 405L587 423L583 569Q578 578 561 578Q543 576 541 565z" bottom="M548 405L541 563Q543 578 562 578Q580 578 583 569L587.500 423" line="M584 422L578 573" top="M541 563Q549 556 562 557Q575 557 578 562" />
    <Leg d="M1138 431L1179 408L1173 569Q1168 578 1152 578Q1134 576 1132 567z" bottom="M1138 431L1131.500 567Q1134 578 1154 578Q1171 578 1173.500 569L1179.500 408" line="M1175 410L1168 574" top="M1132 565Q1139 555 1154 556Q1168 557 1173 565" />
    <Leg d="M866 545Q870 536 887 536Q905 537 907 548L902 724Q897 733 881 733Q861 731 859 723z" bottom="M866 560L859 723Q861 733 881 733Q899 733 902 724L907 563" line="M902 566L898 728" top="M859 720Q868 711 882 712Q896 713 902 721" />
    <path d="M866 548V561L890 572L906 563V548L891 556z" fill="#a8740b" fillOpacity="0.700" />
    <path d="M866 545Q872 556 887 556L891 548L872 539z" fill="#a8740b" fillOpacity="0.600" />
    <g fill="none" stroke="#1c1a18" strokeWidth="1.700" strokeLinejoin="round">
      <path d="M526.500 369L534 348L548 321L570 294L597 271L630 249L667 231L712 214L760 201L808 192L846 186L1211 366L1210 389L890 572L525 392z" />
      <path d="M526.500 369L891 548L1211 366M891 548L890 572" />
      <path d="M936 279.500L1040 330.500L812 460L707.500 409zM935 280V303L732 420M935 303L1017 343M935 303L933 362L961 376M933 362L784 446" />
      <path d="M687 472L685 526L789 577L840 548M791 523L789 577M687 503L790 553L817 538M808 532V543" />
    </g>
  </Scene>
);

const docTabs: [string, boolean][] = [
  ["Page de démarrage", false],
  ["Sans nom : 1*", false],
  ["Fab Tuto FreeCAD0.19-Bases : 1", true],
];

export default function App() {
  return (
    <Window>
      <GlobalStyle />
      <svg width="0" height="0" aria-hidden="true">
        <defs>
          <linearGradient id="paper" x1="0" y1="0" x2="1" y2="1"><stop offset="0" stopColor="#fafaf8" /><stop offset="1" stopColor="#deded8" /></linearGradient>
          <linearGradient id="metal" x1="0" y1="0" x2="1" y2="1"><stop offset="0" stopColor="#a2a2a2" /><stop offset="1" stopColor="#bdbdbd" /></linearGradient>
          <radialGradient id="sun"><stop offset="0" stopColor="#fffbb0" /><stop offset="0.500" stopColor="#fbe52e" /><stop offset="1" stopColor="#fbe52e" stopOpacity="0" /></radialGradient>
          <radialGradient id="rec" cx="0.400" cy="0.300"><stop offset="0" stopColor="#e02828" /><stop offset="1" stopColor="#b80808" /></radialGradient>
          <linearGradient id="leg"><stop offset="0" stopColor="#7a5608" /><stop offset="0.200" stopColor="#c4860c" /><stop offset="0.350" stopColor="#e09a0c" /><stop offset="0.680" stopColor="#e09a0c" /><stop offset="0.850" stopColor="#a8740b" /><stop offset="1" stopColor="#6b4b07" /></linearGradient>
        </defs>
      </svg>
      <TitleBar><Logo /><h1>FreeCAD 0.19</h1></TitleBar>
      <MenuBar>
        {["Fichier", "Édition", "Affichage", "Outils", "Macro", "Sketch", "Part Design", "Measure", "Fenêtre", "Aide"].map((m) => <MenuItem key={m}>{m}</MenuItem>)}
      </MenuBar>
      <ToolRow>
        <ToolBar><Grip $first />{tools("new open save print | cut copy paste | undo v redo w | refresh | whats")}</ToolBar>
        <ToolBar>
          <Grip />
          <Combo>
            <Icon name="workbench" size={16} />
            <ComboSelect aria-label="Atelier"><option>Part Design</option></ComboSelect>
            <Chevron dir="down" w={1} />
          </Combo>
        </ToolBar>
        <ToolBar $open><Grip />{tools("record stop macro play")}</ToolBar>
      </ToolRow>
      <ToolRow>
        <ToolBar><Grip $first />{tools("fitAll fitSel style v bbox! | back fwd linkSel v | sync! v! iso | front top right | rear bottom left | ruler")}</ToolBar>
        <ToolBar $open><Grip />{tools("part group link linkGroup v")}</ToolBar>
      </ToolRow>
      <ToolRow>
        <ToolBar><Grip $first />{tools("body sketchPage import validate | point line plane cs binder clone sheep")}</ToolBar>
        <ToolBar><Grip />{tools("pad revolve loft pipe helix prim v | pocket hole groove subLoft subPipe subHelix subPrim v | mirror linear polar multi | fillet chamfer draft thick | bool")}</ToolBar>
        <ToolBar $open><Grip />{tools("measure angle | toggle clear")}</ToolBar>
      </ToolRow>
      <Main>
        <Dock>
          <DockTitle>
            <h2>Vue combinée</h2>
            <DockButton aria-label="Détacher"><svg width="9" height="9" viewBox="0 0 9 9"><path d="M3 3V1H8V6H6M1 3.500H6V8H1z" fill="none" stroke="#222" strokeWidth="1.400" /></svg></DockButton>
            <DockButton aria-label="Fermer"><svg width="9" height="9" viewBox="0 0 9 9"><path d="M1 1L8 8M8 1L1 8" stroke="#222" strokeWidth="1.900" /></svg></DockButton>
          </DockTitle>
          <Tabs><Tab $active>Modèle</Tab><Tab>Tâches</Tab></Tabs>
          <DockBody>
            <TreeFrame>
              <TreeTable>
                <colgroup><col width="206" /><col width="100" /><col /></colgroup>
                <thead><tr><th>Étiquettes &amp; attributs</th><th>Description</th><th aria-label="Vide" /></tr></thead>
                <tbody>
                  {rows.map(([depth, icon, text, tone, exp]) => (
                    <tr key={text}>
                      <td>
                        <Label $depth={depth} $tone={tone}>
                          <Expander aria-label={`Déplier ${text}`}>{exp && <Chevron dir={exp} color={exp === "down" ? "#333" : "#999"} />}</Expander>
                          <Caption $mark={tone === "body"}><Icon name={icon} size={16} />{text}</Caption>
                        </Label>
                      </td>
                      <td /><td />
                    </tr>
                  ))}
                </tbody>
              </TreeTable>
              <ScrollBar>
                <ScrollStep aria-label="Haut"><Chevron dir="up" color="#555" /></ScrollStep>
                <ScrollThumb />
                <ScrollStep aria-label="Bas"><Chevron dir="down" color="#555" /></ScrollStep>
              </ScrollBar>
            </TreeFrame>
            <Splitter />
            <PropFrame>
              <PropTable><thead><tr><th>Propriété</th><th>Valeur</th></tr></thead></PropTable>
            </PropFrame>
            <BottomTabs>
              <BottomTab><Slant /><TabText>Vue</TabText><Slant right /></BottomTab>
              <BottomTab><Slant /><TabText>Données</TabText><Slant right /></BottomTab>
            </BottomTabs>
          </DockBody>
        </Dock>
        <ViewArea>
          <Model />
          <DocTabs>
            {docTabs.map(([name, active]) => (
              <DocTab key={name} $active={active}>
                <Logo />
                <DocName>{name}</DocName>
                <CloseTab $active={active} aria-label={`Fermer ${name}`}><svg width="8" height="8" viewBox="0 0 8 8"><path d="M1 1L7 7M7 1L1 7" stroke="#fff" strokeWidth="2.200" /></svg></CloseTab>
              </DocTab>
            ))}
          </DocTabs>
        </ViewArea>
      </Main>
      <StatusBar />
    </Window>
  );
}
